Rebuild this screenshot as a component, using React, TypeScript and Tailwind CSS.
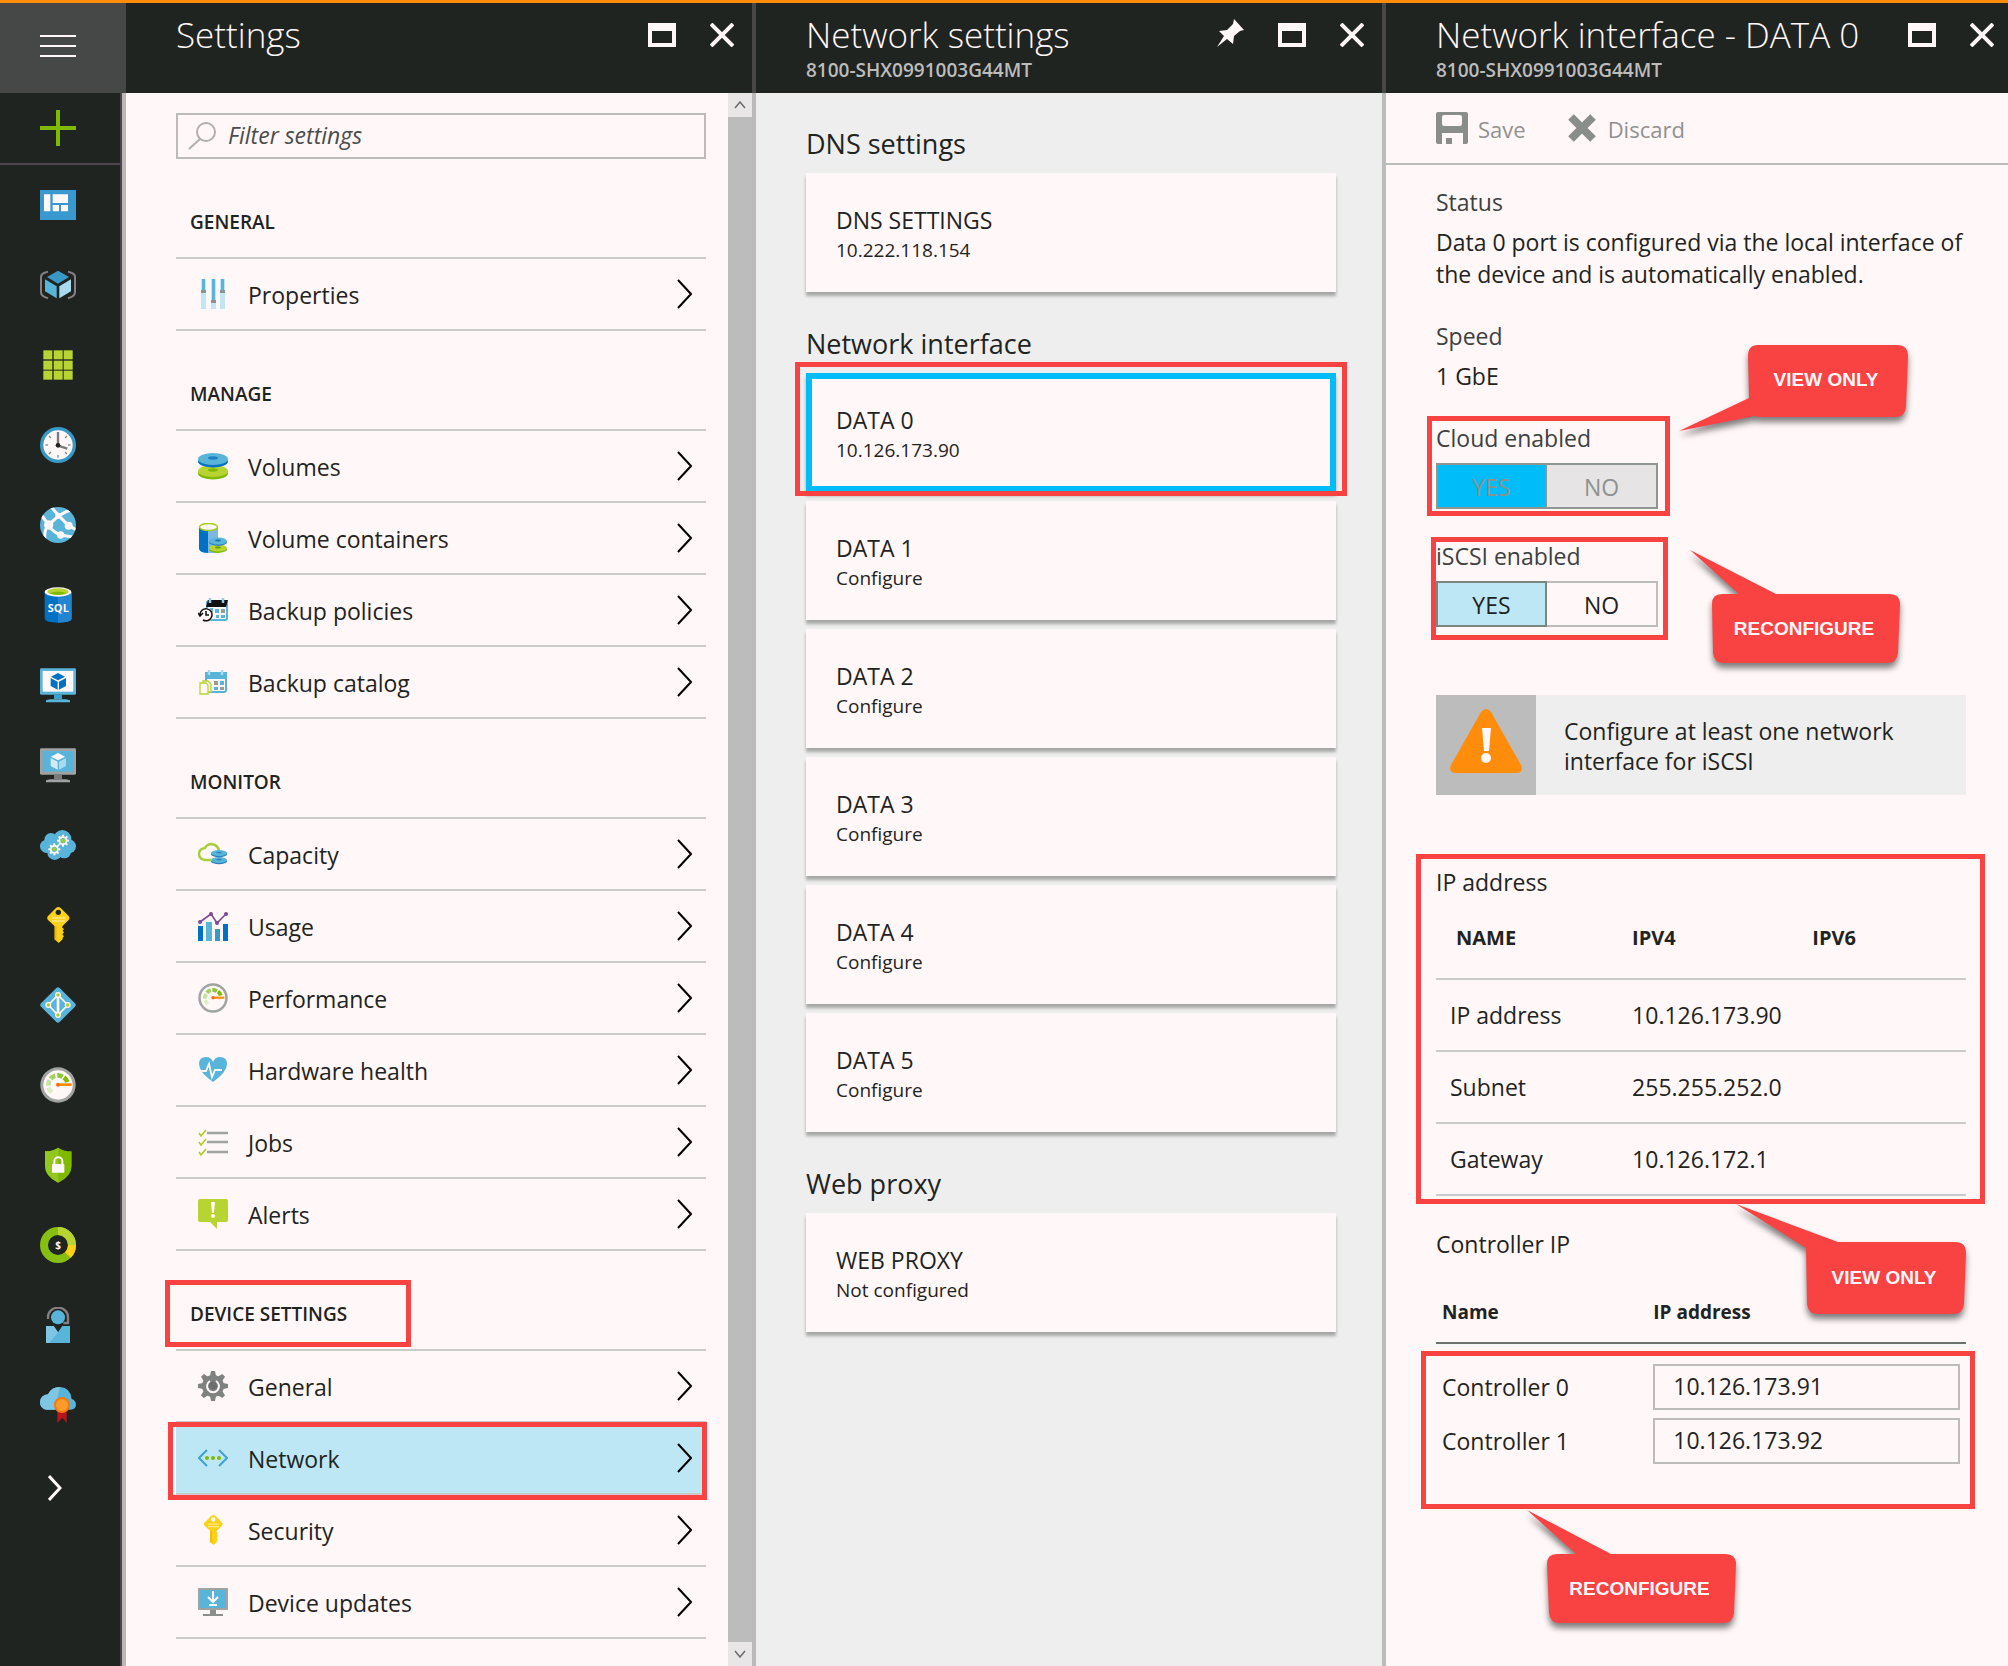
import type { ReactNode } from "react";

/* ---------- shared pieces ---------- */

function Highlight({ className }: { className: string }) {
  return <span aria-hidden="true" className={`pointer-events-none absolute border-5 border-[#f94242] ${className}`} />;
}

function Callout({
  className,
  viewBox,
  path,
  label,
  labelClass,
}: {
  className: string;
  viewBox: string;
  path: string;
  label: string;
  labelClass: string;
}) {
  return (
    <div className={`pointer-events-none absolute z-10 ${className}`}>
      <svg viewBox={viewBox} className="h-full w-full overflow-visible drop-shadow-[0_5px_3px_rgba(0,0,0,0.5)]" aria-hidden="true">
        <path d={path} fill="#f94242" />
      </svg>
      <span
        className={`absolute flex items-center justify-center pr-1 font-['Liberation_Sans',sans-serif] text-[19px] font-bold text-[#fff7f8] ${labelClass}`}
      >
        {label}
      </span>
    </div>
  );
}

function Maximize() {
  return (
    <svg viewBox="0 0 28 24" className="h-6 w-7" aria-hidden="true">
      <path d="M0 0H28V24H0ZM4 8V20H24V8Z" fill="#fff7f8" fillRule="evenodd" />
    </svg>
  );
}

function Close() {
  return (
    <svg viewBox="0 0 24 24" className="h-6 w-6" aria-hidden="true">
      <path d="M1 1L23 23M23 1L1 23" stroke="#fff7f8" strokeWidth="4" />
    </svg>
  );
}

function Pin() {
  return (
    <svg viewBox="0 0 28 28" className="h-7 w-7" aria-hidden="true">
      <path d="M18 0L28 11L24 12L18 17L17 25L11 20L1 28L8 17L3 12L11 11L17 5Z" fill="#fff7f8" />
    </svg>
  );
}

function BladeHeader({ title, subtitle, pin, className }: { title: string; subtitle?: string; pin?: boolean; className: string }) {
  return (
    <header className={`flex h-[90px] shrink-0 items-start justify-between bg-[#1f2421] pt-2 pl-[50px] ${className}`}>
      <div className="min-w-0 whitespace-nowrap">
        <h1 className="text-[35px] leading-[47px] font-light text-[#fff7f8]">{title}</h1>
        {subtitle && <p className="text-[19px] leading-6 font-semibold text-[#bcbcbc]">{subtitle}</p>}
      </div>
      <div className="flex items-center gap-[34px] pt-2">
        {pin && (
          <button type="button" aria-label="Pin">
            <Pin />
          </button>
        )}
        <button type="button" aria-label="Maximize" className="pt-1">
          <Maximize />
        </button>
        <button type="button" aria-label="Close" className="pt-1">
          <Close />
        </button>
      </div>
    </header>
  );
}

/* ---------- navigation icons ---------- */

function NavSvg({ children }: { children: ReactNode }) {
  return (
    <svg viewBox="0 0 108 108" className="h-9 w-9" aria-hidden="true">
      {children}
    </svg>
  );
}

function DashboardIcon() {
  return (
    <NavSvg>
      <rect y="9" width="108" height="90" fill="#3999cf" />
      <path d="M12 22h19v51H12zM38 22h46v26H38zM38 54h19v19H38zM63 54h21v19H63z" fill="#fff7f8" />
    </NavSvg>
  );
}

function ResourceGroupIcon() {
  return (
    <NavSvg>
      <path d="M54 11L87 30L54 50L21 30Z" fill="#3999c6" />
      <path d="M15 37L50 58V94L15 73Z" fill="#59b4d9" />
      <path d="M58 58L93 37V73L58 94Z" fill="#a8dbee" />
      <path d="M24 14L12 18Q3 22 3 30V76Q3 84 12 89L24 94M84 14L96 18Q105 22 105 30V76Q105 84 96 89L84 94" fill="none" stroke="#857f85" strokeWidth="6" />
    </NavSvg>
  );
}

function GridIcon() {
  return (
    <NavSvg>
      {[10, 41, 71].map((y) => [10, 41, 71].map((x) => <rect key={`${x}-${y}`} x={x} y={y} width="27" height="27" fill="#b8d432" />))}
    </NavSvg>
  );
}

function ClockIcon() {
  return (
    <NavSvg>
      <circle cx="54" cy="54" r="54" fill="#3999c6" />
      <circle cx="54" cy="54" r="44" fill="#fff7f8" />
      {[45, 90, 135, 180, 225, 270, 315].map((a) => (
        <path key={a} d="M54 16V24" stroke="#8a8a8a" strokeWidth="4" transform={`rotate(${a} 54 54)`} />
      ))}
      <path d="M54 56V15M54 56L82 65" stroke="#7a7a7a" strokeWidth="7" />
      <circle cx="54" cy="55" r="7" fill="#222" />
    </NavSvg>
  );
}

function WebIcon() {
  return (
    <NavSvg>
      <clipPath id="globe">
        <circle cx="54" cy="54" r="54" />
      </clipPath>
      <g clipPath="url(#globe)">
        <rect width="108" height="108" fill="#59b4d9" />
        <path d="M34 0L56 26M96 8Q64 14 26 54M56 26L86 56L108 68M26 56Q42 78 62 84L98 90M26 54L4 24M24 54Q10 74 16 104" fill="none" stroke="#fff7f8" strokeWidth="9" />
        <circle cx="26" cy="54" r="14" fill="#fff7f8" />
        <circle cx="55" cy="26" r="9" fill="#fff7f8" />
        <circle cx="86" cy="56" r="12" fill="#fff7f8" />
        <circle cx="62" cy="84" r="11" fill="#fff7f8" />
      </g>
    </NavSvg>
  );
}

function SqlIcon() {
  return (
    <NavSvg>
      <path d="M14 16V94Q14 107 54 107T95 94V16Z" fill="#0072c6" />
      <path d="M54 16H95V94Q95 107 54 107Z" fill="#2384cf" />
      <ellipse cx="54" cy="15" rx="40" ry="14" fill="#fff7f8" />
      <ellipse cx="54" cy="14" rx="32" ry="10" fill="#b8d432" />
      <path d="M28 19Q54 8 80 19Q54 29 28 19Z" fill="#7fba00" />
      <text x="55" y="75" textAnchor="middle" fontSize="33" fontWeight="700" fill="#fff7f8">
        SQL
      </text>
    </NavSvg>
  );
}

function MonitorIcon({ frame, screen, stand, top, left, right }: { frame: string; screen: string; stand: string; top: string; left: string; right: string }) {
  return (
    <NavSvg>
      <rect y="4" width="108" height="79" rx="4" fill={frame} />
      <rect x="8" y="12" width="92" height="62" fill={screen} />
      <path d="M42 83H66V96H42Z" fill={stand} />
      <path d="M30 97H78L90 100V106H18V100Z" fill={frame} />
      <path d="M54 18L75 29L54 40L33 29Z" fill={top} />
      <path d="M32 33L53 44V68L32 57Z" fill={left} />
      <path d="M57 44L78 33V57L57 68Z" fill={right} />
    </NavSvg>
  );
}

function Gear({ x, y }: { x: number; y: number }) {
  return (
    <g transform={`translate(${x} ${y})`}>
      {[0, 45, 90, 135].map((a) => (
        <rect key={a} x="-3" y="-18" width="6" height="36" fill="#fff7f8" transform={`rotate(${a})`} />
      ))}
      <circle r="13" fill="#fff7f8" />
      <circle r="8" fill="#59b4d9" />
      <circle r="6" fill="#a6cf1c" />
    </g>
  );
}

function CloudServicesIcon() {
  return (
    <NavSvg>
      <g fill="#59b4d9">
        <circle cx="20" cy="58" r="20" />
        <circle cx="33" cy="38" r="20" />
        <circle cx="67" cy="36" r="27" />
        <circle cx="87" cy="58" r="21" />
        <circle cx="44" cy="77" r="22" />
        <circle cx="73" cy="74" r="20" />
        <circle cx="50" cy="54" r="26" />
      </g>
      <Gear x={69} y={41} />
      <Gear x={43} y={67} />
    </NavSvg>
  );
}

function KeyShape({ hole }: { hole: string }) {
  return (
    <>
      <path d="M48 3Q55 -3 62 3L86 27Q91 33 86 39L67 58V62L72 66L68 71L72 76L67 82L72 88L68 92V97L56 108L44 97V58L24 39Q19 33 24 27Z" fill="#fcd116" />
      <path d="M44 58H50V103L44 97Z" fill="#f5b50f" />
      <path d="M36 33H76M36 42H76" stroke="#ffe98a" strokeWidth="4" />
      <circle cx="55" cy="16" r="8" fill={hole} />
    </>
  );
}

function KeyIcon() {
  return (
    <NavSvg>
      <KeyShape hole="#1f2421" />
    </NavSvg>
  );
}

function DirectoryIcon() {
  return (
    <NavSvg>
      <path d="M49 3Q54 -2 59 3L105 49Q110 54 105 59L59 105Q54 110 49 105L3 59Q-2 54 3 49Z" fill="#59b4d9" />
      <path d="M54 24L25 54L54 84L83 54Z" fill="none" stroke="#fff7f8" strokeWidth="5" />
      <path d="M54 24V84" stroke="#fff7f8" strokeWidth="8" />
      {[
        [54, 24],
        [25, 54],
        [83, 54],
        [54, 84],
      ].map(([x, y]) => (
        <g key={`${x}-${y}`}>
          <circle cx={x} cy={y} r="9" fill="#fff7f8" />
          <circle cx={x} cy={y} r="5" fill="#a6cf1c" />
        </g>
      ))}
    </NavSvg>
  );
}

function GaugeShape() {
  return (
    <>
      <circle cx="54" cy="54" r="53" fill="#a0a4a2" />
      <circle cx="54" cy="54" r="44" fill="#fff7f8" />
      <g fill="none" strokeWidth="14">
        <path d="M35 76A29 29 0 0 1 26 62" stroke="#dcefc0" />
        <path d="M25 56A29 29 0 0 1 29 40" stroke="#c4e29a" />
        <path d="M32 35A29 29 0 0 1 46 26" stroke="#a3d15c" />
        <path d="M52 25A29 29 0 0 1 68 29" stroke="#8cc63f" />
        <path d="M72 31A29 29 0 0 1 82 45" stroke="#7fba00" />
      </g>
      <path d="M54 53H95" stroke="#ff8c00" strokeWidth="8" />
      <circle cx="54" cy="53" r="6" fill="#f26f12" />
    </>
  );
}

function GaugeIcon() {
  return (
    <NavSvg>
      <GaugeShape />
    </NavSvg>
  );
}

function ShieldIcon() {
  return (
    <NavSvg>
      <path d="M55 2Q70 13 95 13V56Q95 88 55 107Q15 88 15 56V13Q40 13 55 2Z" fill="#7fba00" />
      <path d="M55 2V107Q15 88 15 56V13Q40 13 55 2Z" fill="#92c71f" />
      <path d="M43 52V43A12 12 0 0 1 67 43V52" fill="none" stroke="#fff7f8" strokeWidth="6" />
      <rect x="36" y="51" width="37" height="26" rx="2" fill="#fff7f8" />
    </NavSvg>
  );
}

function CostIcon() {
  return (
    <NavSvg>
      <circle cx="54" cy="54" r="42" fill="none" stroke="#86bf12" strokeWidth="24" />
      <path d="M54 12A42 42 0 0 1 96 54" fill="none" stroke="#b8d432" strokeWidth="24" />
      <path d="M96 54A42 42 0 0 1 84 84" fill="none" stroke="#fcd116" strokeWidth="24" />
      <text x="54" y="65" textAnchor="middle" fontSize="30" fontWeight="700" fill="#fff7f8">
        $
      </text>
    </NavSvg>
  );
}

function SupportIcon() {
  return (
    <NavSvg>
      <path d="M24 36V30A30 28 0 0 1 84 30V48H70" fill="none" stroke="#857f85" strokeWidth="7" />
      <circle cx="54" cy="31" r="21" fill="#59b4d9" />
      <path d="M18 57H41L54 76L67 57H90V108H18Z" fill="#59b4d9" />
      <path d="M18 57H41L54 76L28 108H18Z" fill="#7fc5e4" />
    </NavSvg>
  );
}

function CloudCertificateIcon() {
  return (
    <NavSvg>
      <path d="M20 68Q0 66 0 45Q2 24 24 22Q34 0 60 0Q92 2 95 36Q108 40 108 54Q106 68 92 68Z" fill="#59b4d9" />
      <path d="M20 68Q0 66 0 45Q2 24 24 22Q34 0 60 0L44 68Z" fill="#7fc5e4" />
      <path d="M52 72H80V108L67 92L52 108Z" fill="#ba141a" />
      <circle cx="66" cy="54" r="24" fill="#f27a10" />
      <circle cx="66" cy="54" r="18" fill="#ff9b2a" />
    </NavSvg>
  );
}

const navItems: { label: string; icon: ReactNode }[] = [
  { label: "Dashboard", icon: <DashboardIcon /> },
  { label: "Resource groups", icon: <ResourceGroupIcon /> },
  { label: "All resources", icon: <GridIcon /> },
  { label: "Recent", icon: <ClockIcon /> },
  { label: "App Services", icon: <WebIcon /> },
  { label: "SQL databases", icon: <SqlIcon /> },
  {
    label: "Virtual machines",
    icon: <MonitorIcon frame="#59b4d9" screen="#fff7f8" stand="#3f9fcb" top="#0072c6" left="#0072c6" right="#0072c6" />,
  },
  {
    label: "Virtual machines (classic)",
    icon: <MonitorIcon frame="#a0a1a2" screen="#59b4d9" stand="#7a7a7a" top="#fff7f8" left="#d3eaf4" right="#a8dbee" />,
  },
  { label: "Cloud services", icon: <CloudServicesIcon /> },
  { label: "Key vaults", icon: <KeyIcon /> },
  { label: "Active Directory", icon: <DirectoryIcon /> },
  { label: "Monitor", icon: <GaugeIcon /> },
  { label: "Security Center", icon: <ShieldIcon /> },
  { label: "Billing", icon: <CostIcon /> },
  { label: "Help and support", icon: <SupportIcon /> },
  { label: "Advisor", icon: <CloudCertificateIcon /> },
];

function Sidebar() {
  return (
    <nav className="flex flex-col">
      <div className="flex h-[90px] shrink-0 bg-[#454846]">
        <button type="button" aria-label="Menu" className="flex w-[116px] items-center justify-center pb-1">
          <svg viewBox="0 0 36 24" className="h-6 w-9" aria-hidden="true">
            <path d="M0 2H36M0 12H36M0 22H36" stroke="#fff7f8" strokeWidth="2" />
          </svg>
        </button>
      </div>
      <div className="flex grow flex-col border-r-4 border-[#bcb6b7] bg-[#1f2421]">
        <div className="flex grow flex-col border-r-2 border-[#4b464b]">
          <button type="button" aria-label="New" className="flex h-[72px] shrink-0 items-center justify-center border-b-2 border-[#4b464b] pr-1">
            <svg viewBox="0 0 36 36" className="h-9 w-9" aria-hidden="true">
              <path d="M18 0V36M0 18H36" stroke="#7fba00" strokeWidth="4" />
            </svg>
          </button>
          {navItems.map((item) => (
            <button key={item.label} type="button" aria-label={item.label} className="flex h-20 shrink-0 items-center justify-center pr-1">
              {item.icon}
            </button>
          ))}
          <button type="button" aria-label="More services" className="flex h-[86px] shrink-0 items-center justify-center pr-2.5">
            <svg viewBox="0 0 14 26" className="h-[26px] w-3.5" aria-hidden="true">
              <path d="M1 1L12 13L1 25" fill="none" stroke="#fff7f8" strokeWidth="3" />
            </svg>
          </button>
        </div>
      </div>
    </nav>
  );
}

/* ---------- settings list icons ---------- */

function RowSvg({ children, viewBox = "0 0 30 30" }: { children: ReactNode; viewBox?: string }) {
  return (
    <svg viewBox={viewBox} className="h-[30px] w-[30px] shrink-0" aria-hidden="true">
      {children}
    </svg>
  );
}

function Disk({ cy, cx = 15, rx = 15, ry = 6, top, side, hole }: { cy: number; cx?: number; rx?: number; ry?: number; top: string; side: string; hole: string }) {
  return (
    <>
      <ellipse cx={cx} cy={cy + ry / 2.5} rx={rx} ry={ry} fill={side} />
      <ellipse cx={cx} cy={cy} rx={rx} ry={ry} fill={top} />
      <ellipse cx={cx} cy={cy - ry / 6} rx={rx / 3} ry={ry / 3.5} fill={hole} />
    </>
  );
}

const rowIcons: Record<string, ReactNode> = {
  Properties: (
    <RowSvg>
      {[3, 13, 22].map((x, i) => (
        <g key={x}>
          <rect x={x} y="0" width="5" height="30" fill="#c3e6f3" />
          <rect x={x + 1} y="0" width="3" height={i === 1 ? 21 : 12} fill="#59b4d9" />
          <rect x={x} y={i === 1 ? 21 : 11} width="5" height="3" fill="#8d9391" />
        </g>
      ))}
    </RowSvg>
  ),
  Volumes: (
    <RowSvg>
      <Disk cy={20} top="#b8d432" side="#7fba00" hole="#7fba00" />
      <Disk cy={8} top="#59b4d9" side="#0072c6" hole="#1f7fc4" />
    </RowSvg>
  ),
  "Volume containers": (
    <RowSvg>
      <path d="M1 4V26Q2 30 10 30V4Z" fill="#0072c6" />
      <path d="M10 4H20V30H10Z" fill="#7db8e0" />
      <ellipse cx="10.500" cy="4" rx="9" ry="3.500" fill="#fff7f8" stroke="#a6cf1c" strokeWidth="1.500" />
      <Disk cx={20} cy={25} rx={9} ry={3.5} top="#b8d432" side="#7fba00" hole="#6a9b00" />
      <Disk cx={20} cy={18} rx={9} ry={3.5} top="#59b4d9" side="#3383c0" hole="#1f6fb4" />
    </RowSvg>
  ),
  "Backup policies": (
    <RowSvg>
      <rect x="9" y="6" width="20" height="19" rx="2" fill="#fff7f8" stroke="#59b4d9" strokeWidth="2" />
      <path d="M8 12L10 5H30L28 12Z" fill="#111" />
      <path d="M12 3V8M25 3V8" stroke="#8fcfe8" strokeWidth="2.500" />
      <path d="M17 14H21V18H17ZM23 20H27V23H23ZM12 13H15V17H12ZM18 20H21V23H18Z" fill="#59b4d9" />
      <path d="M23 14H27V18H23Z" fill="#9a9a9a" />
      <circle cx="8" cy="20" r="7" fill="#fff7f8" />
      <path d="M2 20A6 6 0 1 1 5 25M8 16V20H11M0 18L2 21L5 18" fill="none" stroke="#111" strokeWidth="1.500" />
    </RowSvg>
  ),
  "Backup catalog": (
    <RowSvg>
      <rect x="8" y="6" width="20" height="19" rx="2" fill="#fff7f8" stroke="#59b4d9" strokeWidth="2" />
      <path d="M7 5H29V12H7Z" fill="#59b4d9" />
      <path d="M11 3V8M24 3V8" stroke="#a8dbee" strokeWidth="2.500" />
      <path d="M16 14H20V18H16ZM22 20H26V23H22Z" fill="#9a9a9a" />
      <path d="M22 14H26V18H22ZM16 20H20V23H16Z" fill="#59b4d9" />
      <path d="M5 14H10L13 17V25H5Z" fill="#fff7f8" stroke="#b8d432" strokeWidth="1.300" />
      <path d="M2 16H8L10 18V27H2Z" fill="#fff7f8" stroke="#b8d432" strokeWidth="1.300" />
    </RowSvg>
  ),
  Capacity: (
    <RowSvg>
      <path d="M13 21H7Q1 20 1 15Q1 10 7 9Q9 5 14 5Q20 6 21 12" fill="none" stroke="#a6cf3a" strokeWidth="2.500" />
      <Disk cx={21} cy={21} rx={8} ry={3} top="#59b4d9" side="#2d7fbd" hole="#2d7fbd" />
      <Disk cx={21} cy={14} rx={8} ry={3} top="#59b4d9" side="#2d7fbd" hole="#2d7fbd" />
    </RowSvg>
  ),
  Usage: (
    <RowSvg>
      <path d="M0 15H5V30H0ZM25 13H30V30H25Z" fill="#0072c6" />
      <path d="M8 11H14V30H8Z" fill="#59b4d9" />
      <path d="M17 18H22V30H17Z" fill="#3999c6" />
      <path d="M2 11L13 3L19 12L28 3" fill="none" stroke="#804998" strokeWidth="1.600" />
      <g fill="#804998">
        <circle cx="2" cy="11" r="2" />
        <circle cx="13" cy="3" r="2" />
        <circle cx="19" cy="12" r="2" />
        <circle cx="28" cy="3" r="2" />
      </g>
    </RowSvg>
  ),
  Performance: (
    <RowSvg viewBox="0 0 108 108">
      <GaugeShape />
    </RowSvg>
  ),
  "Hardware health": (
    <RowSvg>
      <path d="M15 27Q1 17 1 9Q1 2 8 2Q13 2 15 7Q17 2 22 2Q29 2 29 9Q29 17 15 27Z" fill="#59b4d9" />
      <path d="M2 16H8L11 9L14 22L17 15H24" fill="none" stroke="#fff7f8" strokeWidth="1.800" />
    </RowSvg>
  ),
  Jobs: (
    <RowSvg>
      {[6, 15, 25].map((y) => (
        <g key={y} fill="none">
          <path d={`M1 ${y}L3 ${y + 3}L8 ${y - 3}`} stroke="#a6cf1c" strokeWidth="1.500" />
          <path d={`M9 ${y}H30`} stroke="#9fa3a1" strokeWidth="2.500" />
        </g>
      ))}
    </RowSvg>
  ),
  Alerts: (
    <RowSvg>
      <path d="M2 0H28Q30 0 30 2V21Q30 23 28 23H19V30L12 23H2Q0 23 0 21V2Q0 0 2 0Z" fill="#b8d432" />
      <path d="M13 3H17L16 14H14Z" fill="#fff7f8" />
      <circle cx="15" cy="17" r="2" fill="#fff7f8" />
    </RowSvg>
  ),
  General: (
    <RowSvg>
      <g transform="translate(15 15)">
        {[0, 45, 90, 135].map((a) => (
          <path key={a} d="M-3 -10L-2 -15H2L3 -10V10L2 15H-2L-3 10Z" fill="#7e8280" transform={`rotate(${a})`} />
        ))}
        <circle r="11" fill="#7e8280" />
        <path d="M-3 -5A6 6 0 1 0 3 -5" fill="none" stroke="#fff7f8" strokeWidth="2" />
        <path d="M-3 -3A4 4 0 1 0 3 -3L0 -5Z" fill="#6a6e6c" />
      </g>
    </RowSvg>
  ),
  Network: (
    <RowSvg>
      <path d="M9 7L1 15L9 23M21 7L29 15L21 23" fill="none" stroke="#3fa2d0" strokeWidth="2" />
      <g fill="#7fba00">
        <circle cx="9" cy="15" r="2" />
        <circle cx="15" cy="15" r="2" />
        <circle cx="21" cy="15" r="2" />
      </g>
    </RowSvg>
  ),
  Security: (
    <RowSvg viewBox="0 0 108 108">
      <KeyShape hole="#fff7f8" />
    </RowSvg>
  ),
  "Device updates": (
    <RowSvg>
      <rect y="1" width="30" height="22" rx="1" fill="#9fa3a1" />
      <rect x="2" y="3" width="26" height="18" fill="#59b4d9" />
      <path d="M12 23H18V27H25V29H5V27H12Z" fill="#8a8e8c" />
      <path d="M15 4V15M10 10L15 15L20 10M11 18H19" fill="none" stroke="#fff7f8" strokeWidth="2" />
    </RowSvg>
  ),
};

const settingsGroups = [
  { title: "GENERAL", items: ["Properties"] },
  { title: "MANAGE", items: ["Volumes", "Volume containers", "Backup policies", "Backup catalog"] },
  { title: "MONITOR", items: ["Capacity", "Usage", "Performance", "Hardware health", "Jobs", "Alerts"] },
  { title: "DEVICE SETTINGS", items: ["General", "Network", "Security", "Device updates"] },
];

function ScrollArrow({ d, label }: { d: string; label: string }) {
  return (
    <button type="button" aria-label={label} className="flex h-6 w-full items-center justify-center bg-[#e9e6e7]">
      <svg viewBox="0 0 12 8" className="h-2 w-3" aria-hidden="true">
        <path d={d} fill="none" stroke="#6b6b6b" strokeWidth="1.500" />
      </svg>
    </button>
  );
}

function SettingsBlade() {
  return (
    <section className="flex flex-col">
      <BladeHeader title="Settings" className="border-r-4 border-[#484848] pr-[18px]" />
      <div className="flex grow border-r-4 border-[#bcb9ba] bg-[#fff7f8]">
        <div className="grow pt-5 pr-[22px] pb-6 pl-[50px]">
          <label className="flex h-[46px] items-center border-2 border-[#bcbcbc] px-2.5">
            <svg viewBox="0 0 28 28" className="h-7 w-7 shrink-0" aria-hidden="true">
              <circle cx="18" cy="10" r="9" fill="none" stroke="#b0b0b0" strokeWidth="2" />
              <path d="M12 17L1 27" stroke="#b0b0b0" strokeWidth="2" />
            </svg>
            <input
              type="text"
              aria-label="Filter settings"
              placeholder="Filter settings"
              className="ml-3 w-full min-w-0 bg-transparent pb-0.5 text-[23px] italic outline-none placeholder:text-[#4a4d4b]"
            />
          </label>
          {settingsGroups.map((group) => (
            <div key={group.title}>
              <div className="relative flex h-[100px] items-end border-b-2 border-[#cbcbcb] pb-5 pl-3.5">
                <h2 className="text-[19px] leading-[30px] font-semibold">{group.title}</h2>
                {group.title === "DEVICE SETTINGS" && <Highlight className="top-[29px] -left-[11px] h-[67px] w-[246px]" />}
              </div>
              <ul>
                {group.items.map((item) => {
                  const selected = item === "Network";
                  return (
                    <li key={item} className={`relative border-b-2 border-[#cbcbcb] ${selected ? "bg-[#bee7f6]" : ""}`}>
                      <button type="button" className="flex h-[70px] w-full items-center pr-3.5 pl-[22px] text-left">
                        {rowIcons[item]}
                        <span className="ml-5 grow pt-0.5 text-[23px] leading-8">{item}</span>
                        <svg viewBox="0 0 16 30" className="h-[30px] w-4" aria-hidden="true">
                          <path d="M2 1L15 15L2 29" fill="none" stroke="#000" strokeWidth="2" />
                        </svg>
                      </button>
                      {selected && <Highlight className="-top-px -right-px -bottom-[7px] -left-2 z-10" />}
                    </li>
                  );
                })}
              </ul>
            </div>
          ))}
        </div>
        <div className="flex w-6 shrink-0 flex-col justify-between bg-[#bbbcbb]">
          <ScrollArrow label="Scroll up" d="M1 7L6 1L11 7" />
          <ScrollArrow label="Scroll down" d="M1 1L6 7L11 1" />
        </div>
      </div>
    </section>
  );
}

/* ---------- network settings ---------- */

function Card({ title, detail, selected }: { title: string; detail: string; selected?: boolean }) {
  return (
    <div className="relative">
      <button
        type="button"
        className={`flex h-[119px] w-full flex-col justify-center bg-[#fff7f8] pt-0.5 text-left shadow-[0_4px_3px_rgba(0,0,0,0.3)] ${
          selected ? "border-6 border-[#00bcf9] pl-6" : "pl-[30px]"
        }`}
      >
        <span className="text-[23px] leading-8">{title}</span>
        <span className="text-[19px] leading-7">{detail}</span>
      </button>
      {selected && <Highlight className="-inset-x-[11px] -top-[11px] -bottom-1" />}
    </div>
  );
}

const networkSections = [
  { title: "DNS settings", cards: [["DNS SETTINGS", "10.222.118.154"]] },
  {
    title: "Network interface",
    cards: [
      ["DATA 0", "10.126.173.90"],
      ["DATA 1", "Configure"],
      ["DATA 2", "Configure"],
      ["DATA 3", "Configure"],
      ["DATA 4", "Configure"],
      ["DATA 5", "Configure"],
    ],
  },
  { title: "Web proxy", cards: [["WEB PROXY", "Not configured"]] },
];

function NetworkBlade() {
  return (
    <section className="flex flex-col">
      <BladeHeader title="Network settings" subtitle="8100-SHX0991003G44MT" pin className="border-r-4 border-[#484848] pr-[18px]" />
      <div className="flex grow flex-col gap-[34px] border-r-4 border-[#bcbcbc] bg-[#eeeeee] pt-[33px] pr-[46px] pb-8 pl-[50px]">
        {networkSections.map((section) => (
          <div key={section.title}>
            <h2 className="mb-[11px] text-[27px] leading-9">{section.title}</h2>
            <div className="flex flex-col gap-[9px]">
              {section.cards.map(([title, detail]) => (
                <Card key={title} title={title} detail={detail} selected={title === "DATA 0"} />
              ))}
            </div>
          </div>
        ))}
      </div>
    </section>
  );
}

/* ---------- network interface ---------- */

function Toggle({ label, disabled }: { label: string; disabled?: boolean }) {
  return (
    <div role="group" aria-label={label} className="mt-[9px] flex h-[46px] w-[222px]">
      <button
        type="button"
        disabled={disabled}
        aria-pressed="true"
        className={`w-1/2 border-2 pt-0.5 ${disabled ? "border-[#8f9591] bg-[#00bcf9] text-[#8b918d]" : "border-[#7d8581] bg-[#bee7f6]"}`}
      >
        YES
      </button>
      <button
        type="button"
        disabled={disabled}
        aria-pressed="false"
        className={`w-1/2 border-2 border-l-0 pt-0.5 ${disabled ? "border-[#8f9591] bg-[#e6e4e4] text-[#8f9290]" : "border-[#bcbcbc]"}`}
      >
        NO
      </button>
    </div>
  );
}

const ipRows = [
  ["IP address", "10.126.173.90"],
  ["Subnet", "255.255.252.0"],
  ["Gateway", "10.126.172.1"],
];

const controllers = [
  ["Controller 0", "10.126.173.91"],
  ["Controller 1", "10.126.173.92"],
];

function InterfaceBlade() {
  return (
    <section className="flex flex-col overflow-hidden">
      <BladeHeader title="Network interface - DATA 0" subtitle="8100-SHX0991003G44MT" className="pr-3.5" />
      <div className="grow bg-[#fff7f8]">
        <div className="flex h-[72px] items-center gap-[42px] border-b-2 border-[#bcbcbc] pl-[50px] text-[22px] text-[#8f9290]">
          <button type="button" className="flex items-center gap-2.5">
            <svg viewBox="0 0 32 32" className="h-8 w-8" aria-hidden="true">
              <path d="M2 0H30Q32 0 32 2V30Q32 32 30 32H27V21H6V32H2Q0 32 0 30V2Q0 0 2 0ZM6 5V12Q6 14 8 14H24Q26 14 26 12V5Q26 3 24 3H8Q6 3 6 5Z" fill="#8a8e8b" fillRule="evenodd" />
              <path d="M10 26H16V32H10Z" fill="#8a8e8b" />
            </svg>
            <span className="pt-0.5">Save</span>
          </button>
          <button type="button" className="flex items-center gap-3">
            <svg viewBox="0 0 28 28" className="h-7 w-7" aria-hidden="true">
              <path d="M3 3L25 25M25 3L3 25" stroke="#8a8e8b" strokeWidth="8" />
            </svg>
            <span className="pt-0.5">Discard</span>
          </button>
        </div>

        <div className="pt-[21px] pr-[42px] pb-8 pl-[50px] text-[23px] leading-8">
          <p className="text-[#3d413f]">Status</p>
          <p className="mt-2">Data 0 port is configured via the local interface of the device and is automatically enabled.</p>
          <p className="mt-[30px] text-[#3d413f]">Speed</p>
          <p className="mt-2">1 GbE</p>

          <div className="relative mt-[30px]">
            <p className="text-[#3d413f]">Cloud enabled</p>
            <Toggle label="Cloud enabled" disabled />
            <Highlight className="-top-1.5 -bottom-[7px] -left-[9px] w-[243px]" />
            <Callout
              className="-top-[77px] left-[243px] h-[86px] w-[229px]"
              viewBox="0 0 229 86"
              path="M79 0H218Q229 0 229 11L227 62Q226 72 216 72H82Q79 72 76 71L0 86L70 53L69 11Q69 0 79 0Z"
              label="VIEW ONLY"
              labelClass="top-0 right-0 h-[70px] w-40"
            />
          </div>

          <div className="relative mt-[31px]">
            <p className="text-[#3d413f]">iSCSI enabled</p>
            <Toggle label="iSCSI enabled" />
            <Highlight className="-top-[3px] -bottom-[13px] -left-[5px] w-[237px]" />
            <Callout
              className="top-2.5 left-[254px] h-[113px] w-[210px]"
              viewBox="0 0 210 113"
              path="M32 44H49L0 0L86 44H199Q210 44 210 54L208 103Q207 113 197 113H34Q24 113 23 103L22 54Q22 44 32 44Z"
              label="RECONFIGURE"
              labelClass="right-0 bottom-0 h-[69px] w-[188px]"
            />
          </div>

          <div className="mt-[68px] flex min-h-[100px] bg-[#eeeeee]">
            <div className="flex w-[100px] shrink-0 items-center justify-center bg-[#bbbcbb] pb-2">
              <svg viewBox="0 0 72 64" className="h-16 w-[72px]" aria-hidden="true">
                <path d="M31 3Q36 -3 41 3L71 56Q74 64 66 64H6Q-2 64 1 56Z" fill="#ff8c0a" />
                <path d="M32 19H41L39 42H34Z" fill="#fff7f8" />
                <circle cx="36" cy="49" r="5" fill="#fff7f8" />
              </svg>
            </div>
            <p className="self-center pt-0.5 pr-6 pl-7 leading-[30px]">Configure at least one network interface for iSCSI</p>
          </div>

          <div className="relative mt-[71px]">
            <h2>IP address</h2>
            <table className="w-full table-fixed border-collapse text-left">
              <thead>
                <tr className="h-[81px] border-b-2 border-[#cbcbcb] text-[20px]">
                  <th className="w-[37%] pl-5 font-bold">NAME</th>
                  <th className="w-[34%] font-bold">IPV4</th>
                  <th className="font-bold">IPV6</th>
                </tr>
              </thead>
              <tbody>
                {ipRows.map(([name, ipv4]) => (
                  <tr key={name} className="h-[72px] border-b-2 border-[#cbcbcb]">
                    <td className="pl-3.5">{name}</td>
                    <td>{ipv4}</td>
                    <td />
                  </tr>
                ))}
              </tbody>
            </table>
            <Highlight className="-top-3 -right-[19px] -bottom-2 -left-5" />
            <Callout
              className="top-[338px] left-[300px] h-[110px] w-[230px]"
              viewBox="0 0 230 110"
              path="M102 38H219Q230 38 230 49L228 100Q227 110 217 110H82Q72 110 71 100L70 44L0 0Z"
              label="VIEW ONLY"
              labelClass="right-0 bottom-0 h-[72px] w-40"
            />
          </div>

          <h2 className="mt-8 mb-[21px]">Controller IP</h2>
          <div className="relative">
            <table className="w-full table-fixed border-collapse text-left">
              <thead>
                <tr className="h-[62px] border-b-2 border-[#6b716d] text-[19px]">
                  <th className="w-[41%] pl-1.5 font-bold">Name</th>
                  <th className="font-bold">IP address</th>
                </tr>
              </thead>
              <tbody className="before:block before:h-4">
                {controllers.map(([name, ip], i) => (
                  <tr key={name} className="h-[54px]">
                    <td className="pl-1.5">
                      <label htmlFor={`controller-${i}`}>{name}</label>
                    </td>
                    <td className="pr-1.5">
                      <input
                        id={`controller-${i}`}
                        type="text"
                        defaultValue={ip}
                        className="block h-[46px] w-full border-2 border-[#bcbcbc] bg-transparent px-[18px] pb-0.5 outline-none"
                      />
                    </td>
                  </tr>
                ))}
              </tbody>
            </table>
            <Highlight className="top-[70px] -right-[9px] -bottom-[41px] -left-[15px]" />
            <Callout
              className="top-[229px] left-[91px] h-[113px] w-[209px]"
              viewBox="0 0 209 113"
              path="M30 44H49L0 0L84 44H198Q209 44 209 54L207 103Q206 113 196 113H33Q23 113 22 103L20 54Q20 44 30 44Z"
              label="RECONFIGURE"
              labelClass="right-0 bottom-0 h-[69px] w-[189px]"
            />
          </div>
        </div>
      </div>
    </section>
  );
}

export default function App() {
  return (
    <div className="flex min-h-screen flex-col overflow-hidden border-t-3 border-[#ff8c0a] bg-[#1f2421] font-['Open_Sans',sans-serif] text-[#1f2421]">
      <main className="grid grow grid-cols-[126px_630fr_630fr_622fr]">
        <Sidebar />
        <SettingsBlade />
        <NetworkBlade />
        <InterfaceBlade />
      </main>
    </div>
  );
}
